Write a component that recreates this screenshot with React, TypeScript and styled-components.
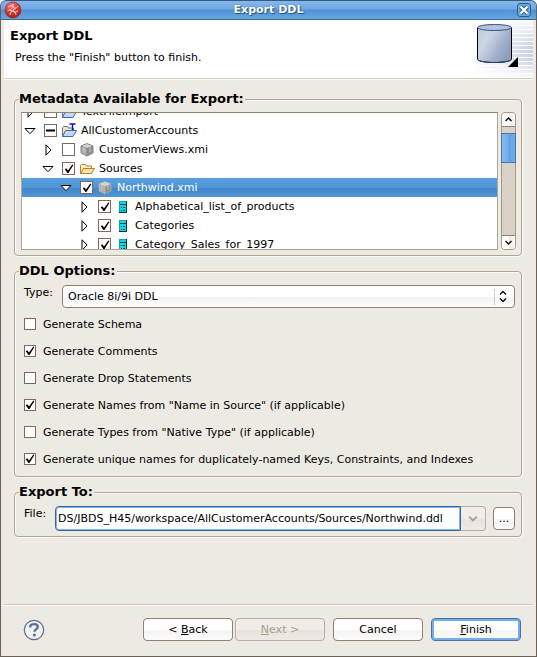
import React, { useLayoutEffect, useRef, useState } from "react";
import styled, { createGlobalStyle, css } from "styled-components";

const color = {
  face: "#edeae3",
  line: "#b0a493",
  lineDark: "#8d8270",
  light: "#fbf9f4",
  text: "#000",
};

const GlobalStyle = createGlobalStyle`
  * { box-sizing: border-box; }
  body { margin: 0; background: #fff; }
  body, button, input, select {
    font-family: "DejaVu Sans", sans-serif;
    font-size: 11px;
    color: ${color.text};
  }
`;

const Window = styled.main`
  display: flex;
  flex-direction: column;
  min-height: 100vh;
  background: ${color.face};
  border: 1px solid #6b6156;
  border-top: 0;
  border-radius: 6px 6px 0 0;
  overflow: hidden;
`;

const TitleBar = styled.header`
  display: grid;
  grid-template-columns: 24px 1fr 24px;
  align-items: center;
  height: 20px;
  margin: 0 -1px;
  border: 1px solid #35597f;
  border-bottom-color: #3a689b;
  border-radius: 6px 6px 0 0;
  background: linear-gradient(#86b7ea 0, #6ea8e4 45%, #4e92d6 50%, #67a7e4 100%);
`;

const WindowTitle = styled.span`
  text-align: center;
  font-weight: bold;
  line-height: 18px;
  color: #fff;
  text-shadow: 1px 1px 1px #24507f, 0 0 1px #24507f;
`;

const CloseButton = styled.button`
  display: flex;
  justify-self: center;
  padding: 0;
  border: 0;
  background: none;
`;

const LogoSlot = styled.span`
  display: flex;
  padding-left: 3px;
`;

const Inner = styled.div`
  display: flex;
  flex: 1;
  flex-direction: column;
  padding: 0 3px 2px;
`;

const Banner = styled.section`
  display: flex;
  justify-content: space-between;
  height: 60px;
  padding-left: 6px;
  background: #fff;
  border-bottom: 1px solid ${color.light};
  box-shadow: inset 0 -1px 0 #d1cbbd;
`;

const BannerTitle = styled.h1`
  margin: 7px 0 0;
  font-size: 13px;
  line-height: 17px;
`;

const BannerText = styled.p`
  margin: 6px 0 0 5px;
  line-height: 15px;
`;

const Body = styled.div`
  display: flex;
  flex-direction: column;
  padding: 11px 11px 0 10px;
  gap: 7px;
`;

const Group = styled.fieldset`
  min-width: 0;
  margin: 0;
  padding: 5px 5px 5px 6px;
  border: 1px solid ${color.line};
  border-radius: 4px;
  box-shadow: inset 1px 1px 0 ${color.light}, 1px 1px 0 ${color.light};
`;

const Legend = styled.legend`
  margin-left: -2px;
  padding: 0 1px 0 0;
  background: ${color.face};
  font-weight: bold;
  font-size: 13px;
  line-height: 16px;
`;

const TreeArea = styled.div`
  display: flex;
  gap: 3px;
  height: 138px;
`;

const TreeView = styled.ul`
  flex: 1;
  margin: 0;
  padding: 0;
  list-style: none;
  overflow: hidden;
  border: 1px solid ${color.line};
  border-top-color: ${color.lineDark};
  background: #fff;
`;

const TreeRow = styled.li<{ $level: number; $selected?: boolean }>`
  display: flex;
  align-items: center;
  height: 19px;
  padding-left: ${(p) => p.$level * 18 + 2}px;
  white-space: nowrap;
  ${(p) =>
    p.$selected &&
    css`
      color: #fff;
      background: linear-gradient(#5b9fdf 0, #4f95d7 50%, #4287c9 55%, #5296d8 100%);
    `}
`;

const Twisty = styled.button`
  display: flex;
  width: 12px;
  margin-right: 8px;
  padding: 0;
  border: 0;
  background: none;
`;

const RowLabel = styled.label`
  display: flex;
  align-items: center;
`;

const IconSlot = styled.span`
  display: flex;
  justify-content: center;
  width: 16px;
  margin: 0 4px;
`;

const ScrollBar = styled.div`
  display: flex;
  flex-direction: column;
  width: 15px;
  border: 1px solid #a3988a;
  border-radius: 4px;
  background: #d9d1c6;
`;

const ScrollButton = styled.button<{ $down?: boolean }>`
  display: flex;
  align-items: center;
  justify-content: center;
  height: 14px;
  padding: 0;
  border: 0;
  border-${(p) => (p.$down ? "top" : "bottom")}: 1px solid ${color.lineDark};
  border-radius: ${(p) => (p.$down ? "0 0 3px 3px" : "3px 3px 0 0")};
  background: linear-gradient(90deg, #fff 50%, #eeebe6 55%, #f8f7f4);
`;

const ScrollTrack = styled.div`
  flex: 1;
  padding-top: 6px;
`;

const ScrollThumb = styled.div`
  height: 30px;
  margin: 0 -1px;
  border: 1px solid #4377ad;
  background: linear-gradient(90deg, #86b9ee 0, #74ade9 48%, #5d9fdf 52%, #73b0ec 100%);
`;

const BoxWrap = styled.span<{ $size: number }>`
  display: grid;
  width: ${(p) => p.$size}px;
  height: ${(p) => p.$size}px;
  place-items: center;
  > * { grid-area: 1 / 1; }
  > svg { pointer-events: none; }
`;

const BoxInput = styled.input`
  width: 100%;
  height: 100%;
  margin: 0;
  appearance: none;
  border: 1px solid #766b5d;
  background: #fff;
`;

const Form = styled.div<{ $tail?: number }>`
  display: flex;
  flex-direction: column;
  gap: 8px;
  padding: 1px 1px ${(p) => p.$tail ?? 0}px 3px;
`;

const Field = styled.div`
  display: flex;
  align-items: flex-start;
`;

const FieldLabel = styled.label<{ $width: number }>`
  flex: none;
  width: ${(p) => p.$width}px;
  padding-top: 1px;
  line-height: 14px;
`;

const SelectWrap = styled.span`
  display: grid;
  flex: 1;
  align-items: center;
  > * { grid-area: 1 / 1; }
  > svg { justify-self: end; margin-right: 4px; pointer-events: none; }
`;

const Select = styled.select`
  width: 100%;
  height: 23px;
  padding: 0 28px 0 5px;
  appearance: none;
  border: 1px solid ${color.lineDark};
  border-radius: 4px;
  background: linear-gradient(#fff 50%, #f5f3ef 55%, #fdfcfb);
`;

const Options = styled.div`
  display: flex;
  flex-direction: column;
  gap: 11px;
`;

const OptionLabel = styled.label`
  display: flex;
  align-items: center;
  gap: 7px;
  height: 16px;
`;

const Combo = styled.span`
  display: flex;
  flex: 1;
  min-width: 0;
  height: 25px;
`;

const PathInput = styled.input`
  flex: 1;
  min-width: 0;
  padding: 0 2px;
  border: 1px solid #35659a;
  border-radius: 4px 0 0 4px;
  background: #fff;
  box-shadow: inset 0 0 0 1px #83b5e9;
  outline: none;
`;

const buttonFace = css`
  border: 1px solid ${color.lineDark};
  border-radius: 4px;
  background: linear-gradient(#fff 50%, #f6f4f1 55%, #fdfcfb);
  &:disabled {
    color: #aa9e8e;
    border-color: #b9ae9f;
    background: linear-gradient(#f0ede8 50%, #e7e3dc 55%, #edeae5);
  }
`;

const DropButton = styled.button`
  ${buttonFace}
  display: flex;
  align-items: center;
  justify-content: center;
  width: 25px;
  padding: 0;
  border-left: 0;
  border-radius: 0 4px 4px 0;
`;

const BrowseButton = styled.button`
  ${buttonFace}
  width: 22px;
  height: 23px;
  margin: 1px 0 0 7px;
  padding: 0;
`;

const Footer = styled.footer`
  display: flex;
  align-items: center;
  margin-top: auto;
  padding: 13px 12px 13px 19px;
  border-top: 1px solid #d1cbbd;
  box-shadow: inset 0 1px 0 ${color.light};
`;

const HelpButton = styled.button`
  display: flex;
  margin-right: auto;
  padding: 0;
  border: 0;
  background: none;
`;

const ButtonPair = styled.div`
  display: flex;
  gap: 2px;
`;

const ActionButton = styled.button<{ $primary?: boolean }>`
  ${buttonFace}
  width: 90px;
  height: 23px;
  padding: 0;
  ${(p) =>
    p.$primary &&
    css`
      border-color: #45749f;
      box-shadow: inset 0 0 0 2px #73adec;
    `}
`;

const Actions = styled.div`
  display: flex;
  gap: 8px;
`;

type BoxState = "on" | "off" | "mixed";

function CheckBox({ id, initial, size = 12 }: { id: string; initial: BoxState; size?: number }) {
  const [state, setState] = useState<BoxState>(initial);
  return (
    <BoxWrap $size={size}>
      <BoxInput
        id={id}
        type="checkbox"
        checked={state === "on"}
        onChange={() => setState(state === "on" ? "off" : "on")}
      />
      {state === "on" && (
        <svg width="10" height="10" viewBox="0 0 10 10">
          <path d="M.8 5.200 2.300 4.300 4 6.500 8.300.6 9.400 1.100 4.500 9H3.400Z" fill="#000" />
        </svg>
      )}
      {state === "mixed" && (
        <svg width="9" height="9" viewBox="0 0 9 9">
          <path d="M0 3.500h9v2H0Z" fill="#000" />
        </svg>
      )}
    </BoxWrap>
  );
}

const Arrow = ({ open }: { open: boolean }) =>
  open ? (
    <svg width="12" height="12" viewBox="0 0 12 12">
      <path d="M1 3.500h10L6 8.700Z" fill="#fff" stroke="#000" />
    </svg>
  ) : (
    <svg width="12" height="12" viewBox="0 0 12 12">
      <path d="M4 .8v10.400L9 6Z" fill="#fff" stroke="#000" />
    </svg>
  );

const ProjectIcon = ({ badge }: { badge?: boolean }) => (
  <svg width="16" height="16" viewBox="0 0 16 16">
    <path d="M1.500 13.500v-9l1-1h4l1 1.500h5v3" fill="#f5e5b5" stroke="#4b71b8" />
    <path d="M1.500 13.500 4.500 7.500h11l-3.500 6Z" fill="#c3d8f7" stroke="#3f68b8" />
    {badge && <path d="M8.500 1h6M11.500 1v6" stroke="#0a0acb" strokeWidth="1.400" fill="none" />}
  </svg>
);

const FolderIcon = () => (
  <svg width="16" height="16" viewBox="0 0 16 16">
    <path d="M1.500 12.500v-8l1-1h4l1 1.500h5v2.500" fill="#fff0c4" stroke="#b77d2c" />
    <path d="M1.500 12.500 4.500 7.500h11l-3 5Z" fill="#fbe2a6" stroke="#b77d2c" />
  </svg>
);

const ModelIcon = ({ dotted }: { dotted?: boolean }) => (
  <svg width="16" height="16" viewBox="0 0 16 16">
    <path d="M8 1.500 14 4 8 6.500 2 4Z" fill="#d2d2d0" />
    <path d="M2 4 8 6.500V14L2 11Z" fill="#b0afad" />
    <path d="M14 4 8 6.500V14l6-3Z" fill="#908f8d" />
    <path
      d="M8 1.500 14 4v7l-6 3-6-3V4ZM2 4l6 2.500L14 4M8 6.500V14"
      fill="none"
      stroke={dotted ? "#c8bcae" : "#858482"}
      strokeDasharray={dotted ? "1.500 1" : undefined}
    />
    <path d="M5 3v7M11 3v7" stroke="#dededc" strokeWidth=".7" />
  </svg>
);

const TableIcon = () => (
  <svg width="10" height="14" viewBox="0 0 10 14">
    <path d="M1 1h8v12H1Z" fill="#08dce0" />
    <path d="M1 1.500h8M1.500 1v12" stroke="#11a5a8" />
    <path d="M8.500 1v11.500H1" fill="none" stroke="#062e30" />
    <path d="M2 4.500h6M3 7.500h1M5 7.500h2M3 10.500h1M5 10.500h2" stroke="#0a4548" />
  </svg>
);

const Chevron = ({ up, muted }: { up?: boolean; muted?: boolean }) => (
  <svg width={muted ? 12 : 9} height={muted ? 9 : 7} viewBox="0 0 9 7">
    <path
      d={up ? "M1.500 5 4.500 2l3 3" : "M1.500 2l3 3 3-3"}
      fill="none"
      stroke={muted ? "#aa9e8e" : "#111"}
      strokeWidth="1.500"
    />
  </svg>
);

const AppLogo = () => (
  <svg width="18" height="18" viewBox="0 0 18 18">
    <defs>
      <radialGradient id="logo" cx=".4" cy=".25" r=".8">
        <stop offset="0" stopColor="#f28a80" />
        <stop offset=".5" stopColor="#d83a33" />
        <stop offset="1" stopColor="#9c1a17" />
      </radialGradient>
    </defs>
    <circle cx="9" cy="9" r="8" fill="url(#logo)" stroke="#a32424" strokeWidth=".6" />
    <path
      d="M4 6q3-3 5 0t5-1M3.500 10q3-3 5 0t5.500 0M6 14q0-4 3-4t3 4M9 3v3M12 7q-3 1-3 3M5 8l2 2"
      fill="none"
      stroke="#f8cbc5"
    />
  </svg>
);

const CloseIcon = () => (
  <svg width="16" height="16" viewBox="0 0 16 16">
    <rect x="1.500" y="1.500" width="13" height="13" rx="2.500" fill="#71aae3" stroke="#2c5d91" />
    <path d="m4.500 4.500 7 7m0-7-7 7" stroke="#2c5d91" strokeWidth="4" />
    <path d="m4.500 4.500 7 7m0-7-7 7" stroke="#fff" strokeWidth="2.200" />
  </svg>
);

const stripes = Array.from({ length: 14 }, (_, i) => i * 4 + 2);

const DatabaseArt = () => (
  <svg width="64" height="58" viewBox="0 0 64 58">
    <defs>
      <linearGradient id="fade" gradientUnits="userSpaceOnUse" x1="0" x2="64">
        <stop offset="0" stopColor="#c9d3e9" stopOpacity="0" />
        <stop offset=".6" stopColor="#c9d3e9" stopOpacity=".6" />
        <stop offset="1" stopColor="#c3cde6" />
      </linearGradient>
      <linearGradient id="fadeY" x2="0" y2="1">
        <stop offset="0" stopColor="#fff" stopOpacity=".9" />
        <stop offset=".5" stopColor="#fff" stopOpacity="0" />
        <stop offset=".7" stopColor="#fff" stopOpacity=".1" />
        <stop offset="1" stopColor="#fff" stopOpacity=".9" />
      </linearGradient>
      <linearGradient id="steel" y2=".6">
        <stop offset="0" stopColor="#bcc8dd" />
        <stop offset=".35" stopColor="#ccd6e6" />
        <stop offset=".75" stopColor="#a0b0cb" />
        <stop offset="1" stopColor="#8d9fbd" />
      </linearGradient>
    </defs>
    {stripes.map((y) => (
      <rect key={y} x="0" y={y} width="64" height="3" fill="url(#fade)" />
    ))}
    <rect width="64" height="58" fill="url(#fadeY)" />
    <path d="M8.500 7.500v32c3 4 31 4 34 0v-32" fill="url(#steel)" stroke="#000" />
    <path d="M8.500 39.500c3 4 31 4 34 0" fill="none" stroke="#26437b" />
    <ellipse cx="25.500" cy="7.500" rx="17" ry="3" fill="#b5c3db" stroke="#31538f" />
    <path d="M49 37v10H39Z" fill="#000" />
  </svg>
);

const HelpIcon = () => (
  <svg width="22" height="22" viewBox="0 0 22 22">
    <circle cx="11" cy="11" r="9.700" fill="#f2f1ee" stroke="#586f91" strokeWidth="1.200" />
    <path
      d="M7.300 8.500V6.500q1.500-1.400 3.900-1.400 3.600 0 3.600 2.700 0 1.500-1.900 2.600-1.400.8-1.400 2.400"
      fill="none"
      stroke="#586f91"
      strokeWidth="2.300"
    />
    <circle cx="11.400" cy="16" r="1.500" fill="#586f91" />
  </svg>
);

interface Node {
  name: string;
  level: number;
  open: boolean;
  check: BoxState;
  icon: React.ReactNode;
  selected?: boolean;
}

const nodes: Node[] = [
  { name: "TextFileImport", level: 0, open: false, check: "off", icon: <ProjectIcon /> },
  { name: "AllCustomerAccounts", level: 0, open: true, check: "mixed", icon: <ProjectIcon badge /> },
  { name: "CustomerViews.xmi", level: 1, open: false, check: "off", icon: <ModelIcon /> },
  { name: "Sources", level: 1, open: true, check: "on", icon: <FolderIcon /> },
  { name: "Northwind.xmi", level: 2, open: true, check: "on", icon: <ModelIcon dotted />, selected: true },
  { name: "Alphabetical_list_of_products", level: 3, open: false, check: "on", icon: <TableIcon /> },
  { name: "Categories", level: 3, open: false, check: "on", icon: <TableIcon /> },
  { name: "Category_Sales_for_1997", level: 3, open: false, check: "on", icon: <TableIcon /> },
];

const options: { label: string; check: BoxState }[] = [
  { label: "Generate Schema", check: "off" },
  { label: "Generate Comments", check: "on" },
  { label: "Generate Drop Statements", check: "off" },
  { label: 'Generate Names from "Name in Source" (if applicable)', check: "on" },
  { label: 'Generate Types from "Native Type" (if applicable)', check: "off" },
  { label: "Generate unique names for duplicately-named Keys, Constraints, and Indexes", check: "on" },
];

function MetadataTree() {
  const view = useRef<HTMLUListElement>(null);
  useLayoutEffect(() => {
    if (view.current) view.current.scrollTop = 11;
  }, []);
  return (
    <TreeArea>
      <TreeView ref={view}>
        {nodes.map((n) => (
          <TreeRow key={n.name} $level={n.level} $selected={n.selected}>
            <Twisty aria-label={`Toggle ${n.name}`} aria-expanded={n.open}>
              <Arrow open={n.open} />
            </Twisty>
            <CheckBox id={n.name} initial={n.check} size={13} />
            <RowLabel htmlFor={n.name}>
              <IconSlot>{n.icon}</IconSlot>
              {n.name}
            </RowLabel>
          </TreeRow>
        ))}
      </TreeView>
      <ScrollBar>
        <ScrollButton aria-label="Scroll up">
          <Chevron up />
        </ScrollButton>
        <ScrollTrack>
          <ScrollThumb />
        </ScrollTrack>
        <ScrollButton $down aria-label="Scroll down">
          <Chevron />
        </ScrollButton>
      </ScrollBar>
    </TreeArea>
  );
}

export default function App() {
  return (
    <>
      <GlobalStyle />
      <Window>
        <TitleBar>
          <LogoSlot>
            <AppLogo />
          </LogoSlot>
          <WindowTitle>Export DDL</WindowTitle>
          <CloseButton aria-label="Close">
            <CloseIcon />
          </CloseButton>
        </TitleBar>
        <Inner>
          <Banner>
            <div>
              <BannerTitle>Export DDL</BannerTitle>
              <BannerText>Press the "Finish" button to finish.</BannerText>
            </div>
            <DatabaseArt />
          </Banner>
          <Body>
            <Group>
              <Legend>Metadata Available for Export:</Legend>
              <MetadataTree />
            </Group>
            <Group>
              <Legend>DDL Options:</Legend>
              <Form $tail={4}>
                <Field>
                  <FieldLabel htmlFor="type" $width={38}>
                    Type:
                  </FieldLabel>
                  <SelectWrap>
                    <Select id="type" defaultValue="oracle">
                      <option value="oracle">Oracle 8i/9i DDL</option>
                    </Select>
                    <svg width="17" height="16" viewBox="0 0 17 16">
                      <path d="M.5 0v16" stroke="#d6cdbf" />
                      <path d="m6 5.500 3-3 3 3M6 9.500l3 3 3-3" fill="none" stroke="#111" strokeWidth="1.500" />
                    </svg>
                  </SelectWrap>
                </Field>
                <Options>
                  {options.map((o, i) => (
                    <OptionLabel key={o.label} htmlFor={`option-${i}`}>
                      <CheckBox id={`option-${i}`} initial={o.check} />
                      {o.label}
                    </OptionLabel>
                  ))}
                </Options>
              </Form>
            </Group>
            <Group>
              <Legend>Export To:</Legend>
              <Form>
                <Field>
                  <FieldLabel htmlFor="file" $width={31}>
                    File:
                  </FieldLabel>
                  <Combo>
                    <PathInput
                      id="file"
                      defaultValue="DS/JBDS_H45/workspace/AllCustomerAccounts/Sources/Northwind.ddl"
                    />
                    <DropButton disabled aria-label="Recent files">
                      <Chevron muted />
                    </DropButton>
                  </Combo>
                  <BrowseButton aria-label="Browse">...</BrowseButton>
                </Field>
              </Form>
            </Group>
          </Body>
          <Footer>
            <HelpButton aria-label="Help">
              <HelpIcon />
            </HelpButton>
            <Actions>
              <ButtonPair>
                <ActionButton>
                  &lt; <u>B</u>ack
                </ActionButton>
                <ActionButton disabled>
                  <u>N</u>ext &gt;
                </ActionButton>
              </ButtonPair>
              <ActionButton>Cancel</ActionButton>
              <ActionButton $primary>
                <u>F</u>inish
              </ActionButton>
            </Actions>
          </Footer>
        </Inner>
      </Window>
    </>
  );
}
